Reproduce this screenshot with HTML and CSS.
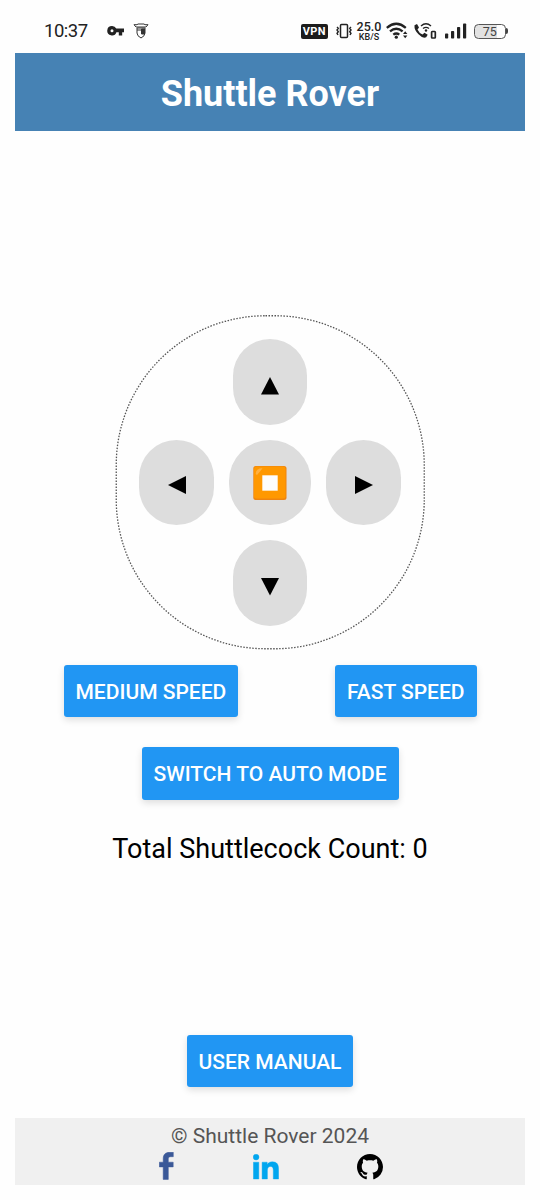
FILE: index.html
```html
<!DOCTYPE html>
<html lang="en">
<head>
<meta charset="utf-8">
<title>Shuttle Rover</title>
<link rel="stylesheet" href="styles.css">
</head>
<body>
<div class="status">
  <span class="clock">10:37</span>
  <svg class="key" width="18" height="12" viewBox="0 0 18 12"><path fill="#222" fill-rule="evenodd" d="M5 1a4.700 4.700 0 1 0 4.400 6.200H11.800V10.500h3.400V7.200H17V3.500H9.300A4.700 4.700 0 0 0 5 1zm0 3.200a1.500 1.500 0 1 1 0 3a1.500 1.500 0 0 1 0-3z"/></svg>
  <svg class="shield" width="16" height="16" viewBox="0 0 16 16" fill="none" stroke="#333"><path d="M1 1.700h3l1-.7h6l1 .7h3L13 4H3z" stroke-width="1"/><path d="M4 5h8v5q0 3-4 5q-4-2-4-5zM4 7h7"/><path d="M8.500 6v5h3V6z" fill="#333"/></svg>
  <span class="vpn">VPN</span>
  <svg class="vibrate" width="16" height="16" viewBox="0 0 16 16" fill="none" stroke="#222"><rect x="4.500" y="1.500" width="7" height="13" rx="1" stroke-width="1.500"/><path d="M1 4l1.300 1.300L1 7l1.300 1.700L1 10.300 2 12M15 4l-1.300 1.300L15 7l-1.300 1.700L15 10.300 14 12" stroke-width="1.400"/></svg>
  <span class="rate"><b>25.0</b><small>KB/S</small></span>
  <svg class="wifi" width="23" height="18" viewBox="0 0 23 18" fill="none" stroke="#222" stroke-width="2.300"><path d="M.8 5.800q9.500-8 19 0M4 9.400q6.300-5.400 12.600 0M7.300 12.600q3-2.300 6 0"/><circle cx="10.300" cy="15.200" r="1.600" fill="#222" stroke="none"/><path d="M17 12l2.200-2.700 2.200 2.700zM17 13.500h4.400l-2.200 2.700z" fill="#222" stroke="none"/></svg>
  <svg class="call" width="23" height="18" viewBox="0 0 23 18" fill="none" stroke="#222"><path d="M.5 3.300L3 2l2 3.500-1.500 2q1.500 3.500 5 5l2-1.700 3.200 2-1.500 2.400Q9 17 4.500 12.300Q0 8 .5 3.300z" fill="#222" stroke="none"/><path d="M7 4q5-4.300 10 0M9 6.500q3-2.300 6 0" stroke-width="1.400"/><circle cx="12" cy="8.500" r="1.200" fill="#222" stroke="none"/><rect x="17.600" y="9.500" width="3.700" height="6.500" rx=".7" stroke-width="1.700"/></svg>
  <svg class="signal" width="22" height="16" viewBox="0 0 22 16" fill="#222"><rect x="0" y="10.500" width="3.200" height="5" rx=".8"/><rect x="6" y="8" width="3.200" height="7.500" rx=".8"/><rect x="12" y="4" width="3.200" height="11.500" rx=".8"/><rect x="18" y=".5" width="3.200" height="15" rx=".8"/></svg>
  <span class="battery">75</span><span class="cap"></span>
</div>
<header class="title">Shuttle Rover</header>
<main class="content">
  <div class="pad">
    <svg class="ring" width="310" height="335" viewBox="0 0 310 335"><rect x="1.250" y=".75" width="308" height="333" rx="149.250" fill="none" stroke="#555" stroke-width="1.300" stroke-dasharray="1.500 1.500"/></svg>
    <div class="row"><div class="key-btn"><svg class="arrow" viewBox="0 0 18 18"><path d="M9 0L18 17.500H0z"/></svg></div></div>
    <div class="row">
      <div class="key-btn side"><svg class="arrow" viewBox="0 0 18 18"><path d="M0 9L18 0V18z"/></svg></div>
      <div class="key-btn stop"><svg width="34" height="34" viewBox="0 0 34 34"><rect x=".3" width="33.200" height="34" rx="2.500" fill="#ee8410"/><rect x="1" y=".5" width="31.500" height="32" rx="2.300" fill="#ff9800"/><path d="M2.700 8Q2.700 2.300 9.500 2.300L7 5.500 4 9z" fill="#ffb040"/><rect x="9.300" y="9.300" width="15.400" height="15.400" fill="#fdfdfd"/></svg></div>
      <div class="key-btn side"><svg class="arrow" viewBox="0 0 18 18"><path d="M18 9L0 0V18z"/></svg></div>
    </div>
    <div class="row"><div class="key-btn"><svg class="arrow" viewBox="0 0 18 18"><path d="M0 0H18L9 17.500z"/></svg></div></div>
  </div>
  <div class="speeds"><div class="btn">MEDIUM SPEED</div><div class="btn">FAST SPEED</div></div>
  <div class="btn auto">SWITCH TO AUTO MODE</div>
  <div class="count">Total Shuttlecock Count: 0</div>
</main>
<div class="btn manual">USER MANUAL</div>
<footer class="footer">
  <div>© Shuttle Rover 2024</div>
  <div class="links">
    <svg width="15" height="28" viewBox="0 0 15 28"><path fill="#3b5998" stroke="#3b5998" stroke-width=".5" d="M14.300.3V4.700h-2.600c-2 0-2.400 1-2.400 2.400v3.100h4.900v4.700H9.300v12.500H4.200V14.900H.3v-4.700h3.900V6.600C4.200 2.400 6.800.3 10.500.3z"/></svg>
    <svg class="in" width="26" height="26" viewBox="0 0 26 26" fill="#00a6ef" stroke="#00a6ef" stroke-width=".4"><circle cx="3.100" cy="3.100" r="2.900"/><path d="M.4 8.200h5.400V25H.4zM9.100 8.200h5.100v2.300c1-1.700 2.700-2.700 5.100-2.700 5 0 6.300 3.100 6.300 7.600V25h-5.300v-8.500c0-2.400-.5-4.100-2.800-4.100-2.400 0-3.100 1.700-3.100 4.100V25H9.100z"/></svg>
    <svg class="octo" width="26" height="26" viewBox="0 0 16 16"><path d="M8 0C3.580 0 0 3.580 0 8c0 3.540 2.290 6.530 5.470 7.590.4.070.55-.17.55-.38 0-.19-.01-.82-.01-1.490-2.010.37-2.530-.49-2.690-.94-.09-.23-.48-.94-.82-1.130-.28-.15-.68-.52-.01-.53.63-.01 1.080.58 1.230.82.72 1.210 1.870.87 2.330.66.070-.52.28-.87.51-1.070-1.780-.2-3.640-.89-3.640-3.950 0-.87.31-1.590.82-2.150-.08-.2-.36-1.020.08-2.120 0 0 .67-.21 2.200.82.640-.18 1.320-.27 2-.27s1.360.09 2 .27c1.530-1.040 2.200-.82 2.200-.82.44 1.100.16 1.920.08 2.120.51.56.82 1.270.82 2.150 0 3.070-1.870 3.750-3.650 3.950.29.25.54.73.54 1.480 0 1.070-.01 1.930-.01 2.200 0 .21.15.46.55.38A8 8 0 0 0 16 8c0-4.420-3.580-8-8-8z"/></svg>
  </div>
</footer>
</body>
</html>
```
FILE: styles.css
```css
* { box-sizing: border-box; }
body {
  margin: 0;
  width: 540px;
  height: 1200px;
  padding: 0 15px 15px;
  background: #fefefe;
  font-family: Roboto, sans-serif;
  display: flex;
  flex-direction: column;
}
svg { display: block; flex: none; }
.status {
  height: 52.5px;
  padding: 10px 0 0 28px;
  display: flex;
  align-items: center;
  color: #222;
  flex: none;
}
.clock { font-size: 18.5px; letter-spacing: -.5px; width: 64px; padding-left: 1px; white-space: nowrap; }
.key { margin-right: 8px; }
.shield { margin-right: 151.500px; }
.vpn {
  width: 27.500px;
  height: 15px;
  border-radius: 2px;
  background: #1c1c1c;
  color: #fff;
  font: bold 11px/16px Roboto, sans-serif;
  letter-spacing: .3px;
  text-align: center;
  margin-right: 8px;
}
.vibrate { margin-right: 4px; }
.rate { width: 26px; display: flex; flex-direction: column; align-items: center; margin-right: 4px; }
.rate b { font: 500 12.500px/12px Roboto, sans-serif; }
.rate small { font: 500 9px/8px Roboto, sans-serif; }
.wifi { margin-right: 5px; }
.call { margin-right: 8px; }
.signal { margin-right: 7px; }
.battery {
  width: 31.500px;
  height: 15.500px;
  border: 1.500px solid #555;
  border-radius: 4.500px;
  background: linear-gradient(90deg, #e2e2e2 74%, #fefefe 74%);
  color: #444;
  font-size: 12.500px;
  line-height: 14px;
  text-align: center;
}
.cap { width: 2px; height: 6px; background: #444; border-radius: 0 2px 2px 0; }
.title {
  height: 78.5px;
  flex: none;
  background: #4682b4;
  color: #fff;
  font-size: 36px;
  font-weight: 700;
  line-height: 82px;
  text-align: center;
}
.content {
  padding-top: 184px;
  display: flex;
  flex-direction: column;
  align-items: center;
}
.pad {
  position: relative;
  width: 310px;
  height: 334.5px;
  padding-top: 24px;
  display: flex;
  flex-direction: column;
  gap: 15px;
}
.ring { position: absolute; left: 0; top: 0; }
.row { display: flex; justify-content: center; gap: 15px; }
.key-btn {
  width: 74.5px;
  height: 85.5px;
  border-radius: 37.5px;
  background: #ddd;
  display: flex;
  align-items: center;
  justify-content: center;
  padding-top: 8.500px;
}
.side { padding-top: 6px; }
.stop { width: 82.5px; border-radius: 42px; padding-top: 2px; }
.arrow { width: 18px; height: 18px; }
.speeds { align-self: stretch; display: flex; justify-content: space-between; padding: 0 48.500px; margin-top: 15px; }
.btn {
  height: 52.5px;
  padding: 0 12px;
  border-radius: 3px;
  background: #2196f3;
  color: #fff;
  font-size: 21px;
  font-weight: 500;
  line-height: 55px;
  white-space: nowrap;
  text-align: center;
  box-shadow: 0 3px 7px rgba(0, 0, 0, .13);
}
.auto { margin-top: 30px; }
.count { margin-top: 33px; font-size: 27px; line-height: 32px; white-space: nowrap; }
.manual { margin: auto auto 30.500px; }
.footer {
  height: 67.5px;
  flex: none;
  background: #f0f0f0;
  color: #555;
  font-size: 21px;
  line-height: 25px;
  padding-top: 6px;
  text-align: center;
}
.links { display: flex; justify-content: space-between; align-items: center; padding: 0 142px 0 144px; margin-top: 3px; }
.in { margin-top: 2px; }
.octo { margin-top: 2px; }
```
